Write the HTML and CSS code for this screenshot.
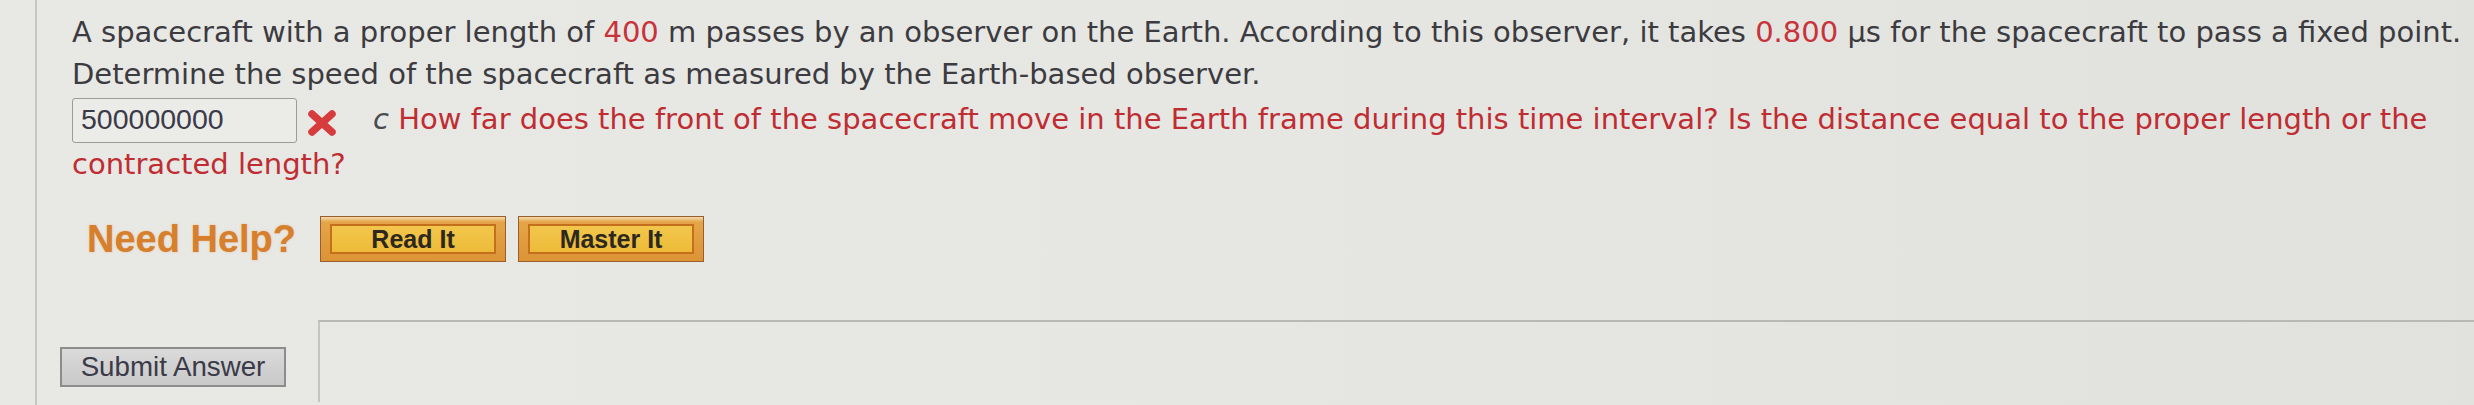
FILE: index.html
```html
<!DOCTYPE html>
<html lang="en">
<head>
<meta charset="utf-8">
<title>Question</title>
<link rel="stylesheet" href="styles.css">
</head>
<body>
<div class="page">
  <div class="question">
    <p class="prompt">A spacecraft with a proper length of <span class="num">400</span> m passes by an observer on the Earth. According to this observer, it takes <span class="num">0.800</span> μs for the spacecraft to pass a fixed point. Determine the speed of the spacecraft as measured by the Earth-based observer.</p>
    <div class="answer-row"><span class="answer-box">500000000</span><svg class="wrong" width="30" height="28" viewBox="0 0 30 28" aria-hidden="true"><path d="M5 5 L25 23 M25 5 L5 23" stroke="#d63c3e" stroke-width="7.5" stroke-linecap="round" fill="none"/></svg><span class="unit">c</span> <span class="feedback">How far does the front of the spacecraft move in the Earth frame during this time interval? Is the distance equal to the proper length or the contracted length?</span></div>
    <div class="help-row">
      <span class="need-help">Need Help?</span>
      <span class="help-btn"><span class="help-btn-inner">Read It</span></span>
      <span class="help-btn"><span class="help-btn-inner">Master It</span></span>
    </div>
  </div>
  <div class="submit-row">
    <div class="submit-col"><button class="submit-btn" type="button">Submit Answer</button></div>
    <div class="next-box"></div>
  </div>
</div>
</body>
</html>
```
FILE: styles.css
```css
html, body {
  margin: 0;
  height: 100%;
  overflow: hidden;
}
body {
  background: linear-gradient(90deg, #e8e8e5 0%, #e6e6e3 50%, #e1e1de 100%);
  font-family: "DejaVu Sans", Verdana, sans-serif;
  color: #3c3b40;
}
.page {
  margin-left: 35px;
  border-left: 2px solid #c6c6c3;
  padding-left: 35px;
  height: 100%;
  box-sizing: border-box;
}
.question {
  padding-top: 11px;
}
.prompt {
  margin: 0;
  font-size: 29px;
  line-height: 42px;
}
.num {
  color: #c8323a;
}
.answer-row {
  font-size: 29px;
  line-height: 42px;
}
.answer-box {
  display: inline-block;
  box-sizing: border-box;
  width: 225px;
  height: 45px;
  margin-top: 3px;
  padding-left: 8px;
  border: 1.5px solid #9b9b9b;
  border-radius: 3px;
  background: #ebebe8;
  font-family: "Liberation Sans", Arial, sans-serif;
  font-size: 28.5px;
  line-height: 40px;
  color: #3a3a48;
}
.wrong {
  vertical-align: -8px;
  margin-left: 10px;
  margin-right: 36px;
}
.unit {
  font-style: italic;
  color: #4a4a50;
}
.feedback {
  color: #bf2d33;
}
.help-row {
  display: flex;
  align-items: center;
  margin-top: 31px;
  padding-left: 15px;
}
.need-help {
  font-family: "Liberation Sans", Arial, sans-serif;
  font-weight: bold;
  font-size: 38px;
  color: #d6802e;
  text-shadow: 0 0 2px rgba(230, 150, 70, 0.5);
  margin-right: 24px;
}
.help-btn {
  box-sizing: border-box;
  width: 186px;
  height: 46px;
  margin-right: 12px;
  padding: 7px 9px;
  border: 1px solid #9a5e2c;
  background: linear-gradient(#f4dcb0 0, #e4a548 5px, #dc9336 100%);
  display: flex;
}
.help-btn-inner {
  flex: 1;
  display: flex;
  align-items: center;
  justify-content: center;
  border: 2px solid #c46f1c;
  background: linear-gradient(#f2c64c, #edbb38);
  font-family: "Liberation Sans", Arial, sans-serif;
  font-weight: bold;
  font-size: 25px;
  color: #2c2820;
}
.submit-row {
  display: flex;
  margin-top: 58px;
}
.submit-col {
  width: 246px;
  padding-top: 27px;
}
.submit-btn {
  box-sizing: border-box;
  margin-left: -12px;
  width: 226px;
  height: 40px;
  padding: 0;
  border: 2px solid #8c8c8c;
  background: linear-gradient(#dadada, #c9c9c9);
  font-family: "Liberation Sans", Arial, sans-serif;
  font-size: 27.7px;
  color: #3a3a48;
}
.next-box {
  flex: 1;
  height: 80px;
  border-top: 2px solid #b8b8b6;
  border-left: 2px solid #c4c4c2;
}
```
